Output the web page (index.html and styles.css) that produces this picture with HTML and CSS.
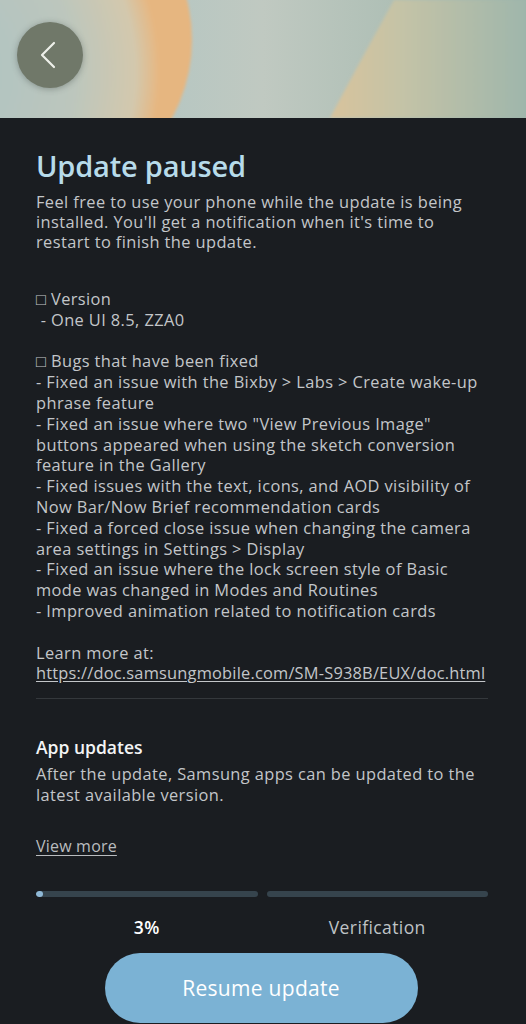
FILE: index.html
```html
<!DOCTYPE html>
<html lang="en">
<head>
<meta charset="utf-8">
<title>Update paused</title>
<link rel="stylesheet" href="styles.css">
</head>
<body>
<header class="hero">
  <svg class="hero-art" viewBox="0 0 526 118" preserveAspectRatio="none" aria-hidden="true">
    <defs>
      <linearGradient id="bg" x1="0" y1="0" x2="1" y2="0">
        <stop offset="0" stop-color="#a6c2c3"/>
        <stop offset="0.5" stop-color="#c0c9c1"/>
        <stop offset="1" stop-color="#9db5aa"/>
      </linearGradient>
      <radialGradient id="orb" cx="0.15" cy="0.6" r="0.75">
        <stop offset="0" stop-color="#a9c3c4"/>
        <stop offset="0.65" stop-color="#bcc6bd"/>
        <stop offset="0.9" stop-color="#d3c8ad"/>
        <stop offset="0.985" stop-color="#e4b987"/>
        <stop offset="1" stop-color="#e6b680"/>
      </radialGradient>
      <linearGradient id="wedge" x1="0" y1="0" x2="1" y2="0">
        <stop offset="0" stop-color="#d8c39c"/>
        <stop offset="0.35" stop-color="#c5c3a6"/>
        <stop offset="1" stop-color="#9fb6ab"/>
      </linearGradient>
      <filter id="soft"><feGaussianBlur stdDeviation="1.5"/></filter>
    </defs>
    <rect width="526" height="118" fill="url(#bg)"/>
    <circle cx="30" cy="40" r="162" fill="url(#orb)" filter="url(#soft)"/>
    <path d="M394 0 L526 0 L526 118 L330 118 C350 80 372 40 394 0 Z" fill="url(#wedge)" filter="url(#soft)"/>
  </svg>
  <button class="back" aria-label="Back">
    <svg viewBox="0 0 66 66" width="66" height="66"><path d="M37 21 L25 33 L37 45" fill="none" stroke="#eef0ea" stroke-width="2.2" stroke-linecap="round" stroke-linejoin="round"/></svg>
  </button>
</header>

<main class="content">
  <h1 class="title">Update paused</h1>
  <p class="intro">Feel free to use your phone while the update is being installed. You'll get a notification when it's time to restart to finish the update.</p>

  <div class="notes">
    <p>□ Version</p>
    <p>&nbsp;- One UI 8.5, ZZA0</p>
    <p class="blank">&nbsp;</p>
    <p>□ Bugs that have been fixed</p>
    <p>- Fixed an issue with the Bixby &gt; Labs &gt; Create wake-up phrase feature</p>
    <p>- Fixed an issue where two "View Previous Image" buttons appeared when using the sketch conversion feature in the Gallery</p>
    <p>- Fixed issues with the text, icons, and AOD visibility of Now Bar/Now Brief recommendation cards</p>
    <p>- Fixed a forced close issue when changing the camera area settings in Settings &gt; Display</p>
    <p>- Fixed an issue where the lock screen style of Basic mode was changed in Modes and Routines</p>
    <p>- Improved animation related to notification cards</p>
    <p class="blank">&nbsp;</p>
    <p>Learn more at:</p>
    <p><a class="link" href="#">https://doc.samsungmobile.com/SM-S938B/EUX/doc.html</a></p>
  </div>

  <hr class="divider">

  <section class="apps">
    <h2 class="apps-title">App updates</h2>
    <p class="apps-text">After the update, Samsung apps can be updated to the latest available version.</p>
    <a class="more" href="#">View more</a>
  </section>

  <div class="progress">
    <div class="step">
      <div class="track"><div class="fill" style="width:3%"></div></div>
      <span class="step-label current">3%</span>
    </div>
    <div class="step">
      <div class="track"></div>
      <span class="step-label">Verification</span>
    </div>
  </div>

  <div class="actions">
    <button class="resume">Resume update</button>
  </div>
</main>
</body>
</html>
```

FILE: styles.css
```css
* { box-sizing: border-box; }

html, body {
  margin: 0;
  padding: 0;
  background: #1a1d21;
}

body {
  font-family: "Open Sans", "Noto Sans", sans-serif;
  color: #c3c6c9;
  overflow: hidden;
  height: 1024px;
}

.hero {
  position: relative;
  height: 118px;
  overflow: hidden;
}

.hero-art {
  display: block;
  width: 100%;
  height: 100%;
}

.back {
  position: absolute;
  left: 17px;
  top: 22px;
  width: 66px;
  height: 66px;
  padding: 0;
  border: none;
  border-radius: 50%;
  background: #707869;
  box-shadow: 0 1px 6px rgba(40, 50, 45, 0.35);
}

.back svg { display: block; }

.content {
  padding: 29px 36px 0 36px;
}

.title {
  margin: 0;
  font-size: 29px;
  line-height: 38px;
  font-weight: 600;
  color: #b7dbea;
  letter-spacing: -0.2px;
}

.intro,
.notes,
.apps-text {
  font-size: 16.4px;
  letter-spacing: 0.4px;
}

.intro {
  margin: 7px 0 0;
  line-height: 20px;
}

.notes {
  margin-top: 37px;
  line-height: 20.8px;
}

.notes p { margin: 0; }

.link {
  color: #c3c6c9;
  white-space: nowrap;
  letter-spacing: 0.2px;
  text-decoration: underline;
  text-underline-offset: 2px;
}

.divider {
  margin: 14px 2px 0 0;
  border: none;
  height: 1px;
  background: #34383c;
}

.apps { margin-top: 35px; }

.apps-title {
  margin: 0;
  font-size: 17.5px;
  line-height: 26px;
  font-weight: 600;
  color: #f3f4f5;
}

.apps-text {
  margin: 3px 0 0;
  line-height: 21px;
}

.more {
  display: inline-block;
  margin-top: 31px;
  font-size: 16px;
  line-height: 20px;
  letter-spacing: 0.2px;
  color: #b9bcbf;
  text-decoration: underline;
  text-underline-offset: 3px;
}

.progress {
  margin-top: 34px;
  margin-right: 2px;
  display: grid;
  grid-template-columns: 1fr 1fr;
  column-gap: 9px;
}

.step {
  display: flex;
  flex-direction: column;
  align-items: center;
}

.track {
  width: 100%;
  height: 6px;
  border-radius: 3px;
  background: #36444d;
  overflow: hidden;
}

.fill {
  height: 100%;
  min-width: 7px;
  border-radius: 3px;
  background: #8fb8d6;
}

.step-label {
  margin-top: 19px;
  font-size: 17.5px;
  line-height: 22px;
  letter-spacing: 0.4px;
  color: #bfc3c6;
}

.step-label.current {
  color: #ffffff;
  font-weight: 600;
}

.actions {
  display: flex;
  justify-content: center;
  margin-top: 15px;
  padding-right: 4px;
}

.resume {
  width: 313px;
  height: 70px;
  border: none;
  border-radius: 35px;
  background: #7bb2d4;
  color: #ffffff;
  font-family: "Open Sans", "Noto Sans", sans-serif;
  font-size: 21px;
  font-weight: 500;
  letter-spacing: 0.3px;
}
```
